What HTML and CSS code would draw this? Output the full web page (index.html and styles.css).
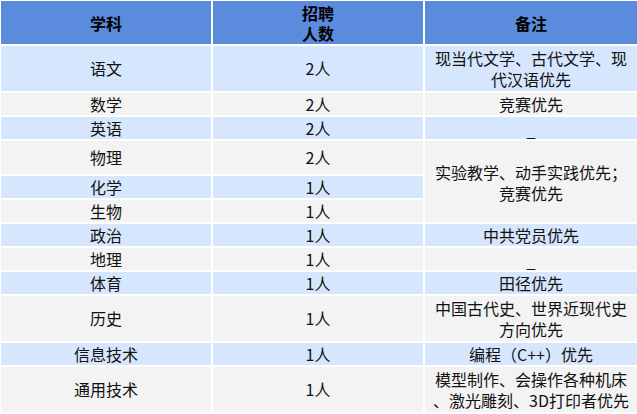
FILE: index.html
```html
<!DOCTYPE html>
<html lang="zh-CN">
<head>
<meta charset="utf-8">
<title>招聘计划</title>
<link rel="stylesheet" href="styles.css">
</head>
<body>
<table class="plan">
  <colgroup>
    <col class="c1">
    <col class="c2">
    <col class="c3">
  </colgroup>
  <thead>
    <tr class="head">
      <th>学科</th>
      <th>招聘<br>人数</th>
      <th>备注</th>
    </tr>
  </thead>
  <tbody>
    <tr class="blue tall"><td>语文</td><td>2人</td><td>现当代文学、古代文学、现<br>代汉语优先</td></tr>
    <tr class="gray short"><td>数学</td><td>2人</td><td>竞赛优先</td></tr>
    <tr class="blue short"><td>英语</td><td>2人</td><td class="dash">_</td></tr>
    <tr class="gray mid"><td>物理</td><td>2人</td><td class="merged" rowspan="3">实验教学、动手实践优先；<br>竞赛优先</td></tr>
    <tr class="blue short"><td>化学</td><td>1人</td></tr>
    <tr class="gray short"><td>生物</td><td>1人</td></tr>
    <tr class="blue short"><td>政治</td><td>1人</td><td>中共党员优先</td></tr>
    <tr class="gray short"><td>地理</td><td>1人</td><td class="dash">_</td></tr>
    <tr class="blue short"><td>体育</td><td>1人</td><td>田径优先</td></tr>
    <tr class="gray tall"><td>历史</td><td>1人</td><td>中国古代史、世界近现代史<br>方向优先</td></tr>
    <tr class="blue short"><td>信息技术</td><td>1人</td><td>编程（C++）优先</td></tr>
    <tr class="gray tall"><td>通用技术</td><td>1人</td><td>模型制作、会操作各种机床<br>、激光雕刻、3D打印者优先</td></tr>
  </tbody>
</table>
</body>
</html>
```

FILE: styles.css
```css
html, body {
  margin: 0;
  padding: 0;
  background: #ffffff;
}

.plan {
  margin: -1px 0 0 -1px;
  width: 639px;
  table-layout: fixed;
  border-collapse: separate;
  border-spacing: 2px;
  font-family: "Noto Sans CJK SC", "Noto Sans", sans-serif;
  font-size: 16px;
  line-height: 21px;
  color: #111111;
}

.c1 { width: 210px; }
.c2 { width: 210px; }
.c3 { width: 212px; }

.plan th,
.plan td {
  padding: 0;
  text-align: center;
  vertical-align: middle;
  white-space: nowrap;
}

.head th {
  height: 43px;
  background: #5a8bdd;
  font-weight: bold;
  color: #000000;
  line-height: 20px;
}

.blue td { background: #d6e6fc; }
.gray td { background: #f3f3f3; }

.short td { height: 22px; }
.mid td { height: 33px; }
.tall td { height: 45px; }

.plan td.merged {
  height: auto;
  padding-top: 2px;
}

.plan td.dash {
  vertical-align: bottom;
  line-height: 18px;
}
```
